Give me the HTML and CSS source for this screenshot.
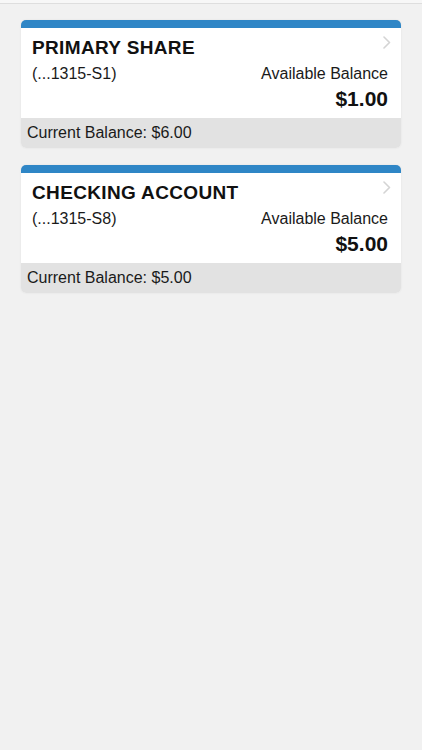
FILE: index.html
```html
<!DOCTYPE html>
<html lang="en">
<head>
    <meta charset="UTF-8">
    <meta name="viewport" content="width=device-width, initial-scale=1.0">
    <title>Accounts</title>
    <link rel="stylesheet" href="styles.css">
</head>
<body>
    <div class="topbar"></div>

    <div class="account-list">
        <div class="account-card">
            <div class="account-body">
                <div class="account-head">
                    <span class="account-name">PRIMARY SHARE</span>
                    <svg class="chevron" width="8" height="13" viewBox="0 0 8 13"><path d="M1 1l5.5 5.5L1 12" fill="none" stroke="#d4d4d4" stroke-width="1.6" stroke-linecap="round" stroke-linejoin="round"/></svg>
                </div>
                <div class="account-row">
                    <span class="account-number">(...1315-S1)</span>
                    <span class="balance-label">Available Balance</span>
                </div>
                <div class="balance-amount">$1.00</div>
            </div>
            <div class="account-foot">Current Balance: $6.00</div>
        </div>

        <div class="account-card">
            <div class="account-body">
                <div class="account-head">
                    <span class="account-name">CHECKING ACCOUNT</span>
                    <svg class="chevron" width="8" height="13" viewBox="0 0 8 13"><path d="M1 1l5.5 5.5L1 12" fill="none" stroke="#d4d4d4" stroke-width="1.6" stroke-linecap="round" stroke-linejoin="round"/></svg>
                </div>
                <div class="account-row">
                    <span class="account-number">(...1315-S8)</span>
                    <span class="balance-label">Available Balance</span>
                </div>
                <div class="balance-amount">$5.00</div>
            </div>
            <div class="account-foot">Current Balance: $5.00</div>
        </div>
    </div>
</body>
</html>
```

FILE: styles.css
```css
body {
    font-family: "Liberation Sans", Arial, sans-serif;
    margin: 0;
    background-color: #f1f1f1;
    color: #111;
}
.topbar {
    height: 3px;
    background-color: #f7f7f7;
    border-bottom: 1px solid #dedede;
}
.account-list {
    display: flex;
    flex-direction: column;
    gap: 17px;
    padding: 16px 21px;
}
.account-card {
    width: 380px;
    background-color: white;
    border-top: 8px solid #2f86c6;
    border-radius: 5px;
    overflow: hidden;
    box-shadow: 0 0 2px rgba(0,0,0,0.08);
}
.account-body {
    padding: 7px 13px 7px 11px;
}
.account-head {
    display: flex;
    justify-content: space-between;
    align-items: flex-start;
}
.account-name {
    font-size: 19px;
    font-weight: bold;
    line-height: 22px;
    margin-top: 2px;
    letter-spacing: 0.35px;
}
.chevron {
    margin-top: 1px;
    margin-right: -3px;
}
.account-row {
    display: flex;
    justify-content: space-between;
    font-size: 16px;
    line-height: 20px;
    margin-top: 5px;
    color: #1a1a1a;
}
.balance-amount {
    text-align: right;
    font-size: 21px;
    font-weight: bold;
    line-height: 24px;
    margin-top: 3px;
}
.account-foot {
    background-color: #e2e2e2;
    font-size: 16px;
    line-height: 30px;
    padding: 0 6px;
    color: #1a1a1a;
}
```
